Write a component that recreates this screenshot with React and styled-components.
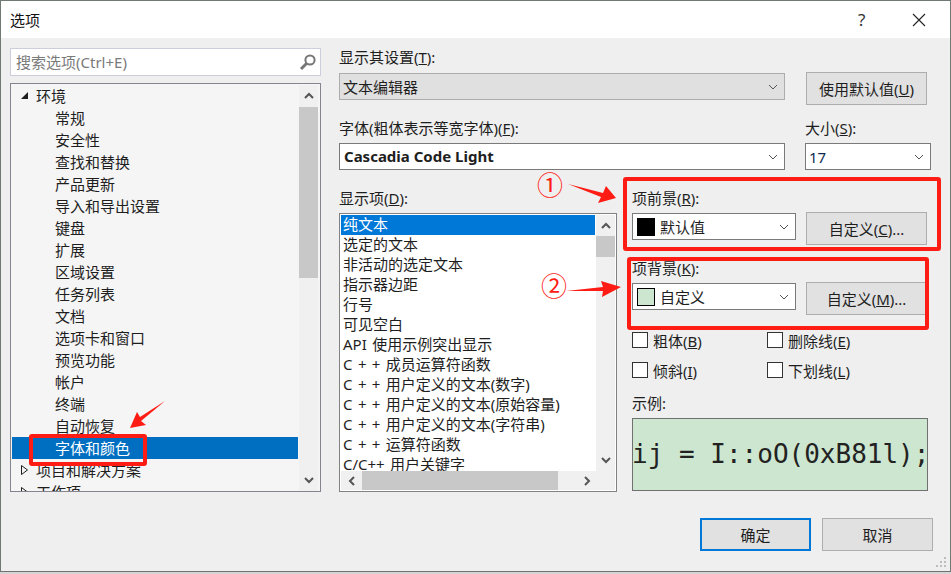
import React from 'react';
import styled, { createGlobalStyle } from 'styled-components';

const GlobalStyle = createGlobalStyle`
    html, body {
        margin: 0;
        padding: 0;
        background: #d4d4d4;
    }
    * {
        box-sizing: border-box;
    }
`;

const Dialog = styled.div`
    position: relative;
    width: 951px;
    height: 572px;
    display: flex;
    flex-direction: column;
    overflow: hidden;
    background: #efefef;
    border: 1px solid #6e7a72;
    border-bottom-color: #707070;
    font-family: "Noto Sans", "Noto Sans CJK SC", sans-serif;
    font-size: 15px;
    color: #1e1e1e;
`;

const TitleBar = styled.header`
    flex: none;
    height: 37px;
    display: flex;
    align-items: center;
    background: #fff;
    padding: 0 24px 0 9px;
    color: #111;
`;

const Title = styled.span`
    flex: 1;
`;

const HelpMark = styled.span`
    width: 54px;
    font-size: 17px;
    color: #333;
`;

const Body = styled.div`
    flex: 1;
    display: flex;
    padding-top: 10px;
    min-height: 0;
`;

const LeftPane = styled.div`
    flex: none;
    width: 338px;
    padding-left: 9px;
    display: flex;
    flex-direction: column;
    gap: 7px;
`;

const SearchBox = styled.div`
    width: 311px;
    height: 28px;
    display: flex;
    align-items: center;
    justify-content: space-between;
    padding: 0 3px 1px 5px;
    background: #fff;
    border: 1px solid #ccceDB;
    color: #7a7a7a;
`;

const Tree = styled.div`
    width: 311px;
    height: 409px;
    display: flex;
    background: #f5f5f5;
    border: 1px solid #85858f;
    padding: 1px 2px 0 1px;
`;

const TreeRows = styled.ul`
    flex: 1;
    margin: 0;
    padding: 0 1px 0 0;
    list-style: none;
    overflow: hidden;
`;

const TreeRow = styled.li`
    height: 22px;
    display: flex;
    align-items: center;
    padding-left: ${p => (p.$child ? 43 : 24)}px;
    padding-bottom: 2px;
    position: relative;
    background: ${p => (p.$selected ? '#006fc2' : 'transparent')};
    color: ${p => (p.$selected ? '#fff' : '#1e1e1e')};
    white-space: nowrap;
`;

const Twisty = styled.svg`
    position: absolute;
    left: 8px;
    top: 6px;
`;

const VScroll = styled.div`
    flex: none;
    width: 19px;
    display: flex;
    flex-direction: column;
    align-items: center;
    background: #f0f0f0;
`;

const ScrollArrow = styled.div`
    flex: none;
    width: 19px;
    height: ${p => p.$size}px;
    display: flex;
    align-items: center;
    justify-content: center;
`;

const VThumb = styled.div`
    flex: none;
    width: 19px;
    height: ${p => p.$height}px;
    background: #c8c8c8;
`;

const Spacer = styled.div`
    flex: 1;
`;

const RightPane = styled.div`
    flex: 1;
    display: flex;
    flex-direction: column;
    min-width: 0;
`;

const TopRow = styled.div`
    display: flex;
    gap: ${p => p.$gap}px;
    margin-bottom: ${p => p.$bottom}px;
`;

const Field = styled.div`
    display: flex;
    flex-direction: column;
    width: ${p => p.$width}px;
`;

const Label = styled.label`
    height: 20px;
    line-height: 18px;
    margin-bottom: ${p => p.$gap ?? 4}px;
    white-space: nowrap;

    u {
        text-underline-offset: 1px;
    }
`;

const Select = styled.div`
    height: 27px;
    display: flex;
    align-items: center;
    gap: 5px;
    padding: 0 6px 0 3px;
    background: ${p => (p.$disabled ? '#e0e0e0' : '#fff')};
    border: 1px solid ${p => (p.$disabled ? '#adadad' : '#7a7a7a')};
    white-space: nowrap;
`;

const SelectText = styled.span`
    flex: 1;
    font-weight: ${p => (p.$bold ? 700 : 400)};
    padding-left: ${p => (p.$bold ? 1 : 0)}px;
    padding-bottom: ${p => (p.$bold ? 2 : 0)}px;
    color: ${p => (p.$blue ? '#0c2a50' : '#1e1e1e')};
`;

const Swatch = styled.span`
    width: 18px;
    height: 18px;
    margin-left: 1px;
    background: ${p => p.$color};
    border: 1px solid #000;
`;

const Button = styled.button`
    flex: none;
    width: ${p => p.$width}px;
    height: ${p => p.$height}px;
    margin-top: ${p => p.$top || 0}px;
    padding: 0;
    font: inherit;
    color: #1e1e1e;
    background: #e1e1e1;
    border: ${p => (p.$primary ? '2px solid #0078d7' : '1px solid #adadad')};

    u {
        text-underline-offset: 1px;
    }
`;

const Lower = styled.div`
    display: grid;
    grid-template-columns: 278px 1fr;
    column-gap: 15px;
`;

const ItemList = styled.div`
    width: 278px;
    height: 279px;
    display: flex;
    flex-direction: column;
    background: #fff;
    border: 1px solid #828282;
    padding: 1px;
`;

const ListMain = styled.div`
    flex: 1;
    min-height: 0;
    display: flex;
`;

const ListRows = styled.ul`
    flex: 1;
    margin: 0;
    padding: 0;
    list-style: none;
    overflow: hidden;
    margin-right: 1px;
`;

const ListRow = styled.li`
    height: 20px;
    line-height: 19px;
    padding-left: 2px;
    word-spacing: 1.5px;
    white-space: nowrap;
    background: ${p => (p.$selected ? '#0078d7' : 'transparent')};
    color: ${p => (p.$selected ? '#fff' : '#1e1e1e')};
`;

const HScroll = styled.div`
    flex: none;
    height: 19px;
    display: flex;
    align-items: center;
    background: #f0f0f0;
`;

const HArrow = styled.div`
    flex: none;
    width: ${p => p.$size}px;
    display: flex;
    justify-content: center;
`;

const HThumb = styled.div`
    width: 197px;
    height: 19px;
    background: #c8c8c8;
`;

const ColorColumn = styled.div`
    display: flex;
    flex-direction: column;
`;

const ColorRow = styled.div`
    display: flex;
    gap: 10px;
    align-items: flex-start;
    margin-bottom: ${p => p.$bottom}px;
`;

const ChecksGrid = styled.div`
    display: grid;
    grid-template-columns: 135px 1fr;
    row-gap: 10px;
    margin-bottom: 14px;
`;

const Check = styled.div`
    height: 20px;
    display: flex;
    align-items: center;
    gap: 5px;
    white-space: nowrap;

    u {
        text-underline-offset: 1px;
    }
`;

const Box = styled.span`
    width: 16px;
    height: 16px;
    background: #fff;
    border: 1px solid #333;
`;

const Sample = styled.div`
    width: 296px;
    height: 73px;
    display: flex;
    align-items: center;
    overflow: hidden;
    padding-bottom: 2px;
    background: #cde6d0;
    border: 1px solid #707070;
    font-family: "DejaVu Sans Mono", monospace;
    font-size: 26px;
    text-indent: -1px;
    color: #222;
    white-space: nowrap;
`;

const Footer = styled.footer`
    flex: none;
    height: 53px;
    display: flex;
    justify-content: flex-end;
    align-items: flex-start;
    gap: 11px;
    padding-right: 17px;
`;

const Grip = styled.svg`
    position: absolute;
    right: 2px;
    bottom: 2px;
`;

const RedBox = styled.div`
    position: absolute;
    left: ${p => p.$x}px;
    top: ${p => p.$y}px;
    width: ${p => p.$w}px;
    height: ${p => p.$h}px;
    border: 4px solid #fe1c14;
    border-radius: 3px;
    pointer-events: none;
`;

const Circled = styled.span`
    position: absolute;
    left: ${p => p.$x}px;
    top: ${p => p.$y}px;
    font-family: "Noto Sans CJK SC", sans-serif;
    font-size: 26px;
    line-height: 30px;
    color: #fe1c14;
`;

const ArrowLayer = styled.svg`
    position: absolute;
    left: -1px;
    top: -1px;
    pointer-events: none;
`;

const Chevron = ({ dir, size = 12, color = '#555' }) => {
    const points = {
        up: '2,8 6,4 10,8',
        down: '2,4 6,8 10,4',
        left: '8,2 4,6 8,10',
        right: '4,2 8,6 4,10',
    };
    return (
        <svg width={size} height={size} viewBox="0 0 12 12">
            <polyline points={points[dir]} fill="none" stroke={color} strokeWidth="2" />
        </svg>
    );
};

const SelectCaret = () => (
    <svg width="10" height="6" viewBox="0 0 10 6">
        <polyline points="1,1 5,5 9,1" fill="none" stroke="#555" strokeWidth="1" />
    </svg>
);

const SearchIcon = () => (
    <svg width="18" height="18" viewBox="0 0 18 18">
        <circle cx="11" cy="7" r="4.6" fill="none" stroke="#777" strokeWidth="2" />
        <line x1="7.5" y1="10.5" x2="2" y2="16" stroke="#777" strokeWidth="3" />
    </svg>
);

const treeItems = [
    '常规', '安全性', '查找和替换', '产品更新', '导入和导出设置', '键盘', '扩展', '区域设置',
    '任务列表', '文档', '选项卡和窗口', '预览功能', '帐户', '终端', '自动恢复',
];

const displayItems = [
    '纯文本', '选定的文本', '非活动的选定文本', '指示器边距', '行号', '可见空白',
    'API 使用示例突出显示', 'C + + 成员运算符函数', 'C + + 用户定义的文本(数字)',
    'C + + 用户定义的文本(原始容量)', 'C + + 用户定义的文本(字符串)', 'C + + 运算符函数',
    'C/C++ 用户关键字',
];

const OpenTwisty = () => (
    <Twisty width="10" height="10" viewBox="0 0 10 10">
        <polygon points="8,1 8,8 1,8" fill="#1e1e1e" />
    </Twisty>
);

const ClosedTwisty = () => (
    <Twisty width="10" height="10" viewBox="0 0 10 10">
        <polygon points="1.5,0.5 7.5,5 1.5,9.5" fill="none" stroke="#1e1e1e" strokeWidth="1" />
    </Twisty>
);

const App = () => (
    <>
        <GlobalStyle />
        <Dialog>
            <TitleBar>
                <Title>选项</Title>
                <HelpMark>?</HelpMark>
                <svg width="14" height="14" viewBox="0 0 14 14">
                    <path d="M1 1 L13 13 M13 1 L1 13" stroke="#222" strokeWidth="1.1" fill="none" />
                </svg>
            </TitleBar>

            <Body>
                <LeftPane>
                    <SearchBox>
                        <span>搜索选项(Ctrl+E)</span>
                        <SearchIcon />
                    </SearchBox>
                    <Tree>
                        <TreeRows>
                            <TreeRow><OpenTwisty />环境</TreeRow>
                            {treeItems.map(item => <TreeRow $child key={item}>{item}</TreeRow>)}
                            <TreeRow $child $selected>字体和颜色</TreeRow>
                            <TreeRow><ClosedTwisty />项目和解决方案</TreeRow>
                            <TreeRow><ClosedTwisty />工作项</TreeRow>
                        </TreeRows>
                        <VScroll>
                            <ScrollArrow $size={22}><Chevron dir="up" /></ScrollArrow>
                            <VThumb $height={171} />
                            <Spacer />
                            <ScrollArrow $size={22}><Chevron dir="down" /></ScrollArrow>
                        </VScroll>
                    </Tree>
                </LeftPane>

                <RightPane>
                    <TopRow $gap={21} $bottom={14}>
                        <Field $width={446}>
                            <Label $gap={5}>显示其设置(<u>T</u>):</Label>
                            <Select $disabled>
                                <SelectText>文本编辑器</SelectText>
                                <SelectCaret />
                            </Select>
                        </Field>
                        <Button $width={121} $height={33} $top={24}>使用默认值(<u>U</u>)</Button>
                    </TopRow>

                    <TopRow $gap={20} $bottom={19}>
                        <Field $width={446}>
                            <Label>字体(粗体表示等宽字体)(<u>F</u>):</Label>
                            <Select>
                                <SelectText $bold>Cascadia Code Light</SelectText>
                                <SelectCaret />
                            </Select>
                        </Field>
                        <Field $width={126}>
                            <Label>大小(<u>S</u>):</Label>
                            <Select>
                                <SelectText $blue>17</SelectText>
                                <SelectCaret />
                            </Select>
                        </Field>
                    </TopRow>

                    <Lower>
                        <Field $width={278}>
                            <Label>显示项(<u>D</u>):</Label>
                            <ItemList>
                                <ListMain>
                                    <ListRows>
                                        {displayItems.map((item, i) => (
                                            <ListRow $selected={i === 0} key={item}>{item}</ListRow>
                                        ))}
                                    </ListRows>
                                    <VScroll>
                                        <ScrollArrow $size={21}><Chevron dir="up" /></ScrollArrow>
                                        <VThumb $height={21} />
                                        <Spacer />
                                        <ScrollArrow $size={22}><Chevron dir="down" /></ScrollArrow>
                                    </VScroll>
                                </ListMain>
                                <HScroll>
                                    <HArrow $size={21}><Chevron dir="left" /></HArrow>
                                    <HThumb />
                                    <Spacer />
                                    <HArrow $size={57}><Chevron dir="right" /></HArrow>
                                </HScroll>
                            </ItemList>
                        </Field>

                        <ColorColumn>
                            <Label>项前景(<u>R</u>):</Label>
                            <ColorRow $bottom={14}>
                                <Field $width={164}>
                                    <Select>
                                        <Swatch $color="#000" />
                                        <SelectText>默认值</SelectText>
                                        <SelectCaret />
                                    </Select>
                                </Field>
                                <Button $width={121} $height={33} $top={-1}>自定义(<u>C</u>)...</Button>
                            </ColorRow>
                            <Label>项背景(<u>K</u>):</Label>
                            <ColorRow $bottom={15}>
                                <Field $width={164}>
                                    <Select>
                                        <Swatch $color="#cde6d0" />
                                        <SelectText>自定义</SelectText>
                                        <SelectCaret />
                                    </Select>
                                </Field>
                                <Button $width={121} $height={33} $top={-1}>自定义(<u>M</u>)...</Button>
                            </ColorRow>
                            <ChecksGrid>
                                <Check><Box /><span>粗体(<u>B</u>)</span></Check>
                                <Check><Box /><span>删除线(<u>E</u>)</span></Check>
                                <Check><Box /><span>倾斜(<u>I</u>)</span></Check>
                                <Check><Box /><span>下划线(<u>L</u>)</span></Check>
                            </ChecksGrid>
                            <Label>示例:</Label>
                            <Sample>ij = I::oO(0xB81l);</Sample>
                        </ColorColumn>
                    </Lower>
                </RightPane>
            </Body>

            <Footer>
                <Button $primary $width={111} $height={33}>确定</Button>
                <Button $width={111} $height={33}>取消</Button>
            </Footer>

            <Grip width="12" height="12" viewBox="0 0 12 12">
                <g fill="#bdbdbd">
                    <rect x="8" y="0" width="2" height="2" />
                    <rect x="4" y="4" width="2" height="2" />
                    <rect x="8" y="4" width="2" height="2" />
                    <rect x="0" y="8" width="2" height="2" />
                    <rect x="4" y="8" width="2" height="2" />
                    <rect x="8" y="8" width="2" height="2" />
                </g>
            </Grip>

            {/* annotations drawn on top of the screenshot */}
            <RedBox $x={28} $y={433} $w={118} $h={32} />
            <RedBox $x={622} $y={176} $w={318} $h={74} />
            <RedBox $x={626} $y={256} $w={302} $h={73} />
            <Circled $x={536} $y={168}>①</Circled>
            <Circled $x={540} $y={269}>②</Circled>
            <ArrowLayer width="951" height="574" viewBox="0 0 951 574">
                <g fill="#fe1c14">
                    <polygon points="165,401 141,421 146,425 130,428 137,412 140,417" />
                    <polygon points="568,184 603,193 606,186 616,198 598,203 601,197" />
                    <polygon points="566,291 603,287 601,281 621,287 602,297 603,291" />
                </g>
            </ArrowLayer>
        </Dialog>
    </>
);

export default App;
